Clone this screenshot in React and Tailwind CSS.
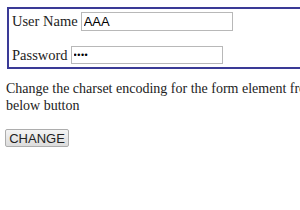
export default function App() {
  return (
    <div className="h-[210px] w-[300px] overflow-hidden bg-white">
      <div className="w-[420px] pl-[5px] pt-[7px] text-[14.5px] leading-[16.5px] text-[#222]" style={{ fontFamily: '"Liberation Serif", serif' }}>
        <fieldset className="ml-[2px] h-[62px] w-[400px] border-2 border-[#3a3a96] px-[3px] pt-[3px]">
          <div className="flex items-center gap-[3px]">
            <span>User Name</span>
            <input
              readOnly
              value="AAA"
              className="h-[19px] w-[152px] border border-[#b8b8b8] px-[2px] text-[13px] text-black outline-none"
              style={{ fontFamily: '"Liberation Sans", sans-serif' }}
            />
          </div>
          <div className="mt-[15px] flex items-center gap-[3px]">
            <span>Password</span>
            <input
              readOnly
              value="••••"
              className="h-[18px] w-[152px] border border-[#b8b8b8] px-[2px] text-[9px] tracking-[0.5px] text-black outline-none"
              style={{ fontFamily: '"Liberation Sans", sans-serif' }}
            />
          </div>
        </fieldset>
        <p className="mt-[12px] whitespace-nowrap pl-[1px] text-[14px] leading-[16.5px]">
          Change the charset encoding for the form element from UTF-8 to ISO-8859-1 by clicking the
          <br />
          below button
        </p>
        <button
          type="button"
          className="mt-[15px] h-[18px] w-[64px] rounded-[2px] border border-[#adadad] bg-gradient-to-b from-[#f4f4f4] to-[#dcdcdc] text-[13px] leading-none text-[#222]"
          style={{ fontFamily: '"Liberation Sans", sans-serif' }}
        >
          CHANGE
        </button>
      </div>
    </div>
  )
}
